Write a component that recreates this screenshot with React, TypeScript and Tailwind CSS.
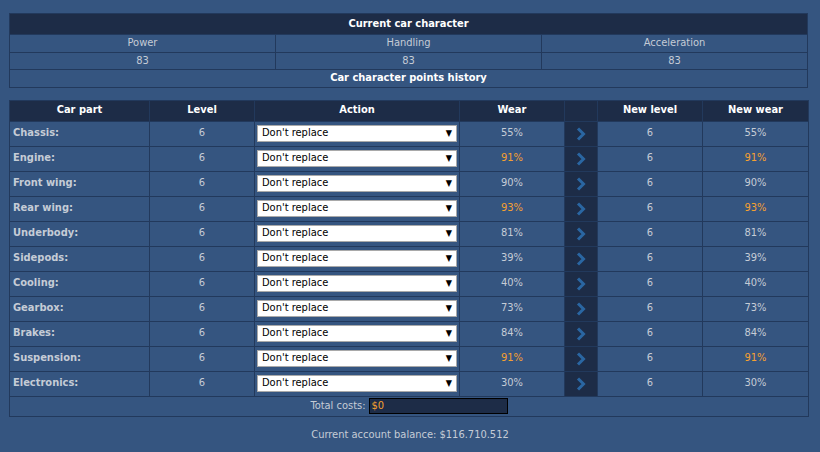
const parts: [string, string, boolean][] = [
  ["Chassis", "55%", false],
  ["Engine", "91%", true],
  ["Front wing", "90%", false],
  ["Rear wing", "93%", true],
  ["Underbody", "81%", false],
  ["Sidepods", "39%", false],
  ["Cooling", "40%", false],
  ["Gearbox", "73%", false],
  ["Brakes", "84%", false],
  ["Suspension", "91%", true],
  ["Electronics", "30%", false],
];

function Chevron() {
  return (
    <svg width="10" height="14" viewBox="0 0 10 14" className="mx-auto block">
      <path d="M2 1.5 L7.5 7 L2 12.5" fill="none" stroke="#2a66a2" strokeWidth="3" />
    </svg>
  );
}

export default function App() {
  const cell = "border border-[#22395c]";
  const head = "border border-[#22395c] bg-[#1d2c47] text-white font-bold";
  return (
    <div
      className="w-[820px] h-[452px] bg-[#355580] text-[#c5ccd6] text-[11px] pt-[13px] px-[9px]"
      style={{ fontFamily: "'DejaVu Sans Condensed', 'DejaVu Sans', sans-serif" }}
    >
      {/* Car character */}
      <table className="w-[799px] border-collapse text-center table-fixed">
        <tbody>
          <tr className="h-[21px]">
            <td colSpan={3} className={`${head} pt-[1px]`}>Current car character</td>
          </tr>
          <tr className="h-[17px]">
            <td className={cell}>Power</td>
            <td className={cell}>Handling</td>
            <td className={cell}>Acceleration</td>
          </tr>
          <tr className="h-[17px]">
            <td className={cell}>83</td>
            <td className={cell}>83</td>
            <td className={cell}>83</td>
          </tr>
          <tr className="h-[16px]">
            <td colSpan={3} className={`${cell} text-white font-bold`}>Car character points history</td>
          </tr>
        </tbody>
      </table>

      {/* Parts */}
      <table className="mt-[12px] w-[799px] border-collapse text-center table-fixed">
        <colgroup>
          <col className="w-[140px]" />
          <col className="w-[105px]" />
          <col className="w-[205px]" />
          <col className="w-[105px]" />
          <col className="w-[33px]" />
          <col className="w-[105px]" />
          <col className="w-[106px]" />
        </colgroup>
        <thead>
          <tr className="h-[21px]">
            <th className={head}>Car part</th>
            <th className={head}>Level</th>
            <th className={head}>Action</th>
            <th className={head}>Wear</th>
            <th className={head}></th>
            <th className={head}>New level</th>
            <th className={head}>New wear</th>
          </tr>
        </thead>
        <tbody>
          {parts.map(([name, wear, hot]) => (
            <tr key={name} className="h-[25px]">
              <td className={`${cell} text-left pl-[3px] font-bold`}>{name}:</td>
              <td className={cell}>6</td>
              <td className={`${cell} px-[2px]`}>
                <div className="flex items-center justify-between h-[17px] bg-white border border-[#a9a9a9] text-black pl-[4px] pr-[4px]">
                  <span>Don't replace</span>
                  <span className="text-[9px]">▼</span>
                </div>
              </td>
              <td className={`${cell} ${hot ? "text-[#f5a030]" : ""}`}>{wear}</td>
              <td className={`${cell} bg-[#1d2c47]`}><Chevron /></td>
              <td className={cell}>6</td>
              <td className={`${cell} ${hot ? "text-[#f5a030]" : ""}`}>{wear}</td>
            </tr>
          ))}
          <tr className="h-[20px]">
            <td colSpan={7} className={cell}>
              <div className="flex items-center justify-center">
                <span>Total costs:</span>
                <span className="ml-[3px] w-[139px] h-[16px] bg-[#1d2c47] border border-black text-left text-[#f5a030] pl-[2px] leading-[14px]">$0</span>
              </div>
            </td>
          </tr>
        </tbody>
      </table>

      <div className="text-center mt-[10px]">Current account balance: $116.710.512</div>
    </div>
  );
}
